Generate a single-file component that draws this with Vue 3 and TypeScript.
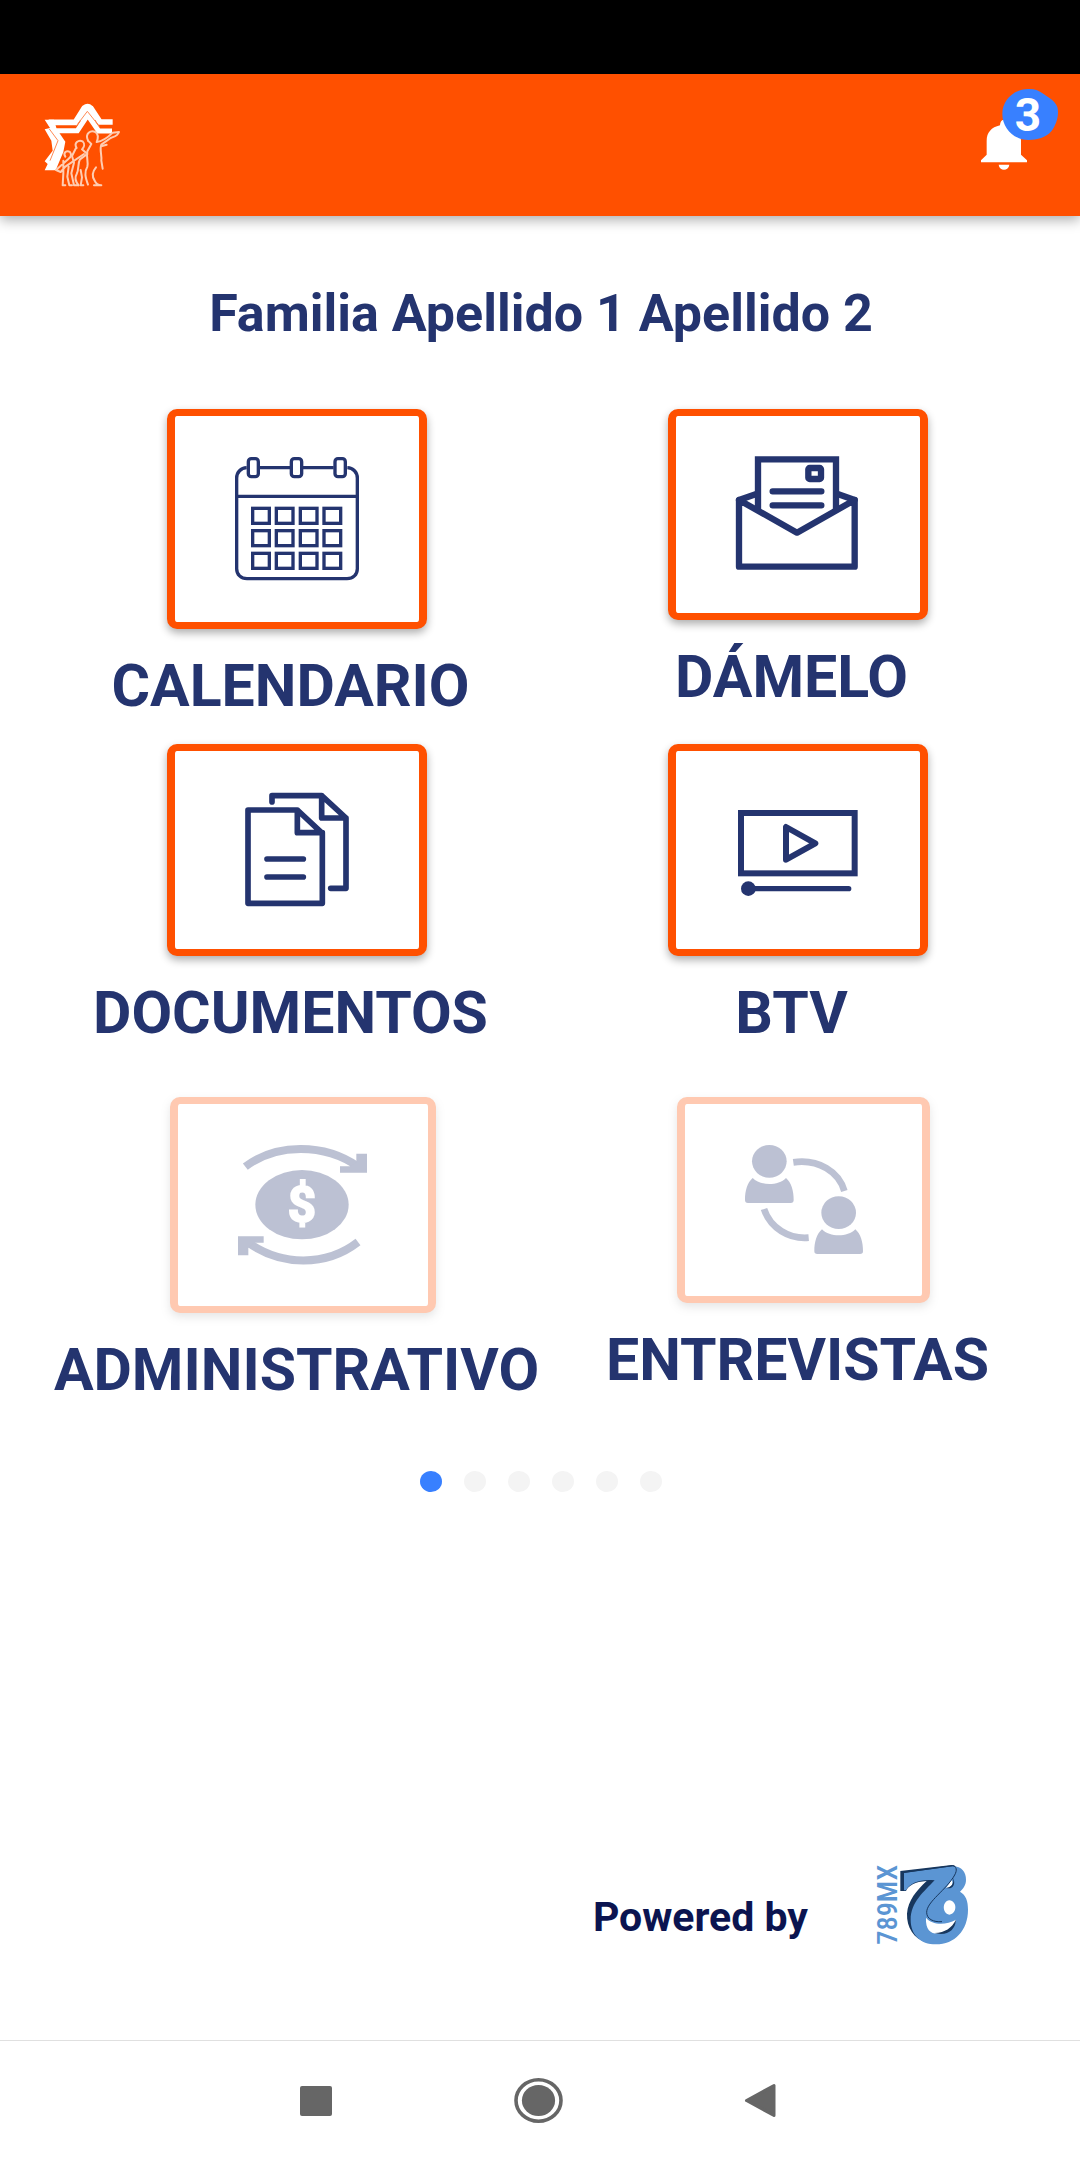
<script setup lang="ts">
import { ref } from 'vue'

type IconName = 'calendar' | 'mail' | 'documents' | 'video' | 'money' | 'people'

interface Tile {
  id: string
  label: string
  icon: IconName
  viewBox: string
  width: number
  height: number
  disabled?: boolean
}

const rows: Tile[][] = [
  [
    { id: 'calendario', label: 'CALENDARIO', icon: 'calendar', viewBox: '438 201 372 372', width: 124, height: 124 },
    { id: 'damelo', label: 'DÁMELO', icon: 'mail', viewBox: '405 201 372 345', width: 124, height: 115 },
  ],
  [
    { id: 'documentos', label: 'DOCUMENTOS', icon: 'documents', viewBox: '468 186 372 348', width: 124, height: 116 },
    { id: 'btv', label: 'BTV', icon: 'video', viewBox: '405 186 372 348', width: 124, height: 116 },
  ],
  [
    { id: 'administrativo', label: 'ADMINISTRATIVO', icon: 'money', viewBox: '597 195 390 360', width: 130, height: 120, disabled: true },
    { id: 'entrevistas', label: 'ENTREVISTAS', icon: 'people', viewBox: '462 195 351 330', width: 117, height: 110, disabled: true },
  ],
]

const dayColumns = [491, 562, 634, 705]
const dayRows = [355, 422, 490]
const slides = 6
const current = ref(0)
</script>

<template>
  <div class="page">
    <div class="status-bar"></div>
    <header class="app-bar">
      <svg class="brand" viewBox="132 130 228 249" aria-label="Logo">
        <g fill="none" stroke="#fff" stroke-linejoin="miter">
          <path d="M338 184H300L272 142Q263 134 253 142L226 185H146" stroke-width="17" />
          <path d="M336 211H296L263 163L232 210H158" stroke-width="15" />
          <path d="M240 178L262 146L286 178" stroke-width="16" />
        </g>
        <path fill="#fff" d="M134 177H162L170 205L196 243L190 274L167 329H134L143 310L134 302L158 270L154 240L134 206L150 202Z" />
        <g fill="none" stroke="#ff8a55" stroke-width="3">
          <path d="M148 205L174 240L150 300M228 197L262 152L298 197" />
        </g>
        <g fill="none" stroke="#ffcdb2" stroke-width="6" stroke-linecap="round" stroke-linejoin="round">
          <path d="M264 240C254 218 272 208 286 214C298 222 294 234 290 244C310 242 326 228 338 216L357 214C352 228 340 228 332 232L304 252C298 266 306 282 304 300L308 324" />
          <path d="M264 240L274 250L262 272C258 290 266 306 262 318C252 334 256 350 264 372M320 252L306 256" />
          <path d="M288 320C276 334 276 348 284 360C288 370 294 374 304 374H282" />
          <path d="M230 262C220 246 236 236 248 242C256 250 252 260 246 266L262 280L240 296C232 310 238 324 230 340C224 350 226 362 236 374M228 262L216 286L222 306L214 338L222 374H232" />
          <path d="M196 288C188 276 200 268 210 274C216 282 212 290 206 294L168 328L182 334L196 318L252 280M190 300V338L188 374H196M206 318L202 348L208 374H216M242 328L246 350L242 374H250" />
        </g>
      </svg>
      <button class="bell" type="button" aria-label="Notificaciones">
        <svg class="bell-icon" viewBox="243 88 231 243" aria-hidden="true">
          <path fill="#fff" d="M300 197C301 185 306 180 312 180C320 180 324 185 325 197C350 203 363 219 363 243V285L381 302V308H243V302L260 285V243C260 219 274 203 300 197ZM296 315H328C326 335 298 335 296 315Z" />
          <path fill="#3880ff" d="M384 88C404 87 416 92 432 104C446 114 463 122 472 142C478 164 470 194 454 215C438 234 411 241 386 241C345 241 307 209 307 162C307 120 344 88 384 88Z" />
        </svg>
        <span class="badge">3</span>
      </button>
    </header>

    <main>
      <h1>Familia Apellido 1 Apellido 2</h1>
      <div class="rows">
        <div v-for="(row, r) in rows" :key="r" class="row">
          <div v-for="tile in row" :key="tile.id" class="tile">
            <button class="card" type="button" :disabled="tile.disabled" :aria-labelledby="tile.id">
              <svg :viewBox="tile.viewBox" :width="tile.width" :height="tile.height" aria-hidden="true">
                <g v-if="tile.icon === 'calendar'" fill="none" stroke="#24346f" stroke-width="10">
                  <path d="M473 233C456 234 443 246 443 264V536C443 554 456 566 474 566H774C792 566 805 554 805 536V264C805 246 792 234 775 233M512 233H603M642 233H734M443 319H805" />
                  <rect x="478" y="206" width="30" height="54" rx="9" />
                  <rect x="607" y="206" width="31" height="54" rx="9" />
                  <rect x="738" y="206" width="31" height="54" rx="9" />
                  <template v-for="y in dayRows" :key="y">
                    <rect v-for="x in dayColumns" :key="x" :x="x" :y="y" width="50" height="45" />
                  </template>
                </g>
                <g v-else-if="tile.icon === 'mail'" fill="none" stroke="#24346f" stroke-width="19" stroke-linecap="round" stroke-linejoin="round">
                  <path d="M414 330V530H761V330L588 428Z" />
                  <path d="M414 330L466 312M761 330L710 312" />
                  <path d="M471 358V208H705V358" stroke-linecap="butt" stroke-linejoin="miter" />
                  <path d="M515 304H661M515 346H661" />
                  <rect x="622" y="234" width="38" height="33" rx="4" />
                </g>
                <g v-else-if="tile.icon === 'documents'" fill="none" stroke="#24346f" stroke-width="17" stroke-linecap="round" stroke-linejoin="round">
                  <path d="M507 240H655L730 310V520H507ZM655 240V308H730" />
                  <path d="M579 216V197H728L801 264V475H755M728 197V264H801" />
                  <path d="M564 387H673M564 441H673" />
                </g>
                <g v-else-if="tile.icon === 'video'" fill="none" stroke="#24346f" stroke-width="18">
                  <rect x="420" y="249" width="341" height="181" />
                  <path d="M555 291V389L643 340Z" stroke-linejoin="round" />
                  <path d="M444 476H743" stroke-linecap="round" stroke-width="16" />
                  <circle cx="442" cy="476" r="22" fill="#24346f" stroke="none" />
                </g>
                <g v-else-if="tile.icon === 'money'" fill="#24346f">
                  <path d="M619 260C710 190 855 188 958 260" fill="none" stroke="#24346f" stroke-width="24" />
                  <path d="M952 221H984V278H903V259H932L952 248Z" />
                  <path d="M957 486C862 560 725 560 622 484" fill="none" stroke="#24346f" stroke-width="24" />
                  <path d="M597 469H674V488H646L628 504V526H597Z" />
                  <ellipse cx="789" cy="374" rx="140" ry="104" />
                  <text x="789" y="427" text-anchor="middle" class="dollar">$</text>
                </g>
                <g v-else fill="#24346f">
                  <g>
                    <ellipse cx="535" cy="244" rx="52" ry="49" />
                    <path d="M485 294C508 318 562 318 585 294C601 308 608 332 608 360Q608 369 599 369H471Q462 369 462 360C462 332 469 308 485 294Z" />
                  </g>
                  <g transform="translate(208 154)">
                    <ellipse cx="535" cy="244" rx="52" ry="49" />
                    <path d="M485 294C508 318 562 318 585 294C601 308 608 332 608 360Q608 368 599 368H471Q462 368 462 360C462 332 469 308 485 294Z" />
                  </g>
                  <path d="M607 247C683 236 744 276 760 333" fill="none" stroke="#24346f" stroke-width="20" />
                  <path d="M519 387C538 444 594 478 653 473" fill="none" stroke="#24346f" stroke-width="20" />
                </g>
              </svg>
            </button>
            <p :id="tile.id" class="label">{{ tile.label }}</p>
          </div>
        </div>
      </div>
      <div class="dots">
        <button
          v-for="n in slides"
          :key="n"
          type="button"
          class="dot"
          :class="{ active: current === n - 1 }"
          :aria-label="`Página ${n}`"
          @click="current = n - 1"
        ></button>
      </div>
    </main>

    <footer class="powered">
      <span>Powered by</span>
      <svg class="powered-logo" viewBox="900 104 294 240" aria-label="789MX">
        <text class="mx" transform="translate(980 343) rotate(-90)">789MX</text>
        <path fill="#17375e" d="M991 122L1145 104Q1160 104 1160 118L1110 180C1070 220 1040 270 1072 336C1030 326 1010 290 1011 250C1014 210 1040 180 1070 152C1035 154 1015 166 1008 182H991Z" />
        <path fill="#5b95d3" fill-rule="evenodd" d="M1002 128L1148 108C1176 108 1188 126 1188 148C1188 164 1180 174 1170 184C1188 194 1194 212 1194 238C1194 300 1154 342 1098 342C1050 342 1022 312 1022 268C1022 216 1062 184 1094 150C1052 146 1022 156 1008 180H1002ZM1138 210C1116 212 1116 250 1138 253C1162 250 1162 212 1138 210ZM1068 262C1066 300 1084 312 1108 310C1136 308 1154 292 1158 268C1126 286 1086 284 1068 262ZM1128 173L1145 149C1152 162 1142 174 1128 173Z" />
        <path fill="none" stroke="#17375e" stroke-width="3" d="M1002 126L1148 106C1160 108 1162 120 1154 134C1130 178 1070 214 1070 246C1070 266 1090 276 1116 274" />
        <path fill="#17375e" d="M1094 308C1126 306 1144 294 1158 268C1156 300 1130 318 1094 308ZM1128 173C1150 178 1158 160 1149 142C1153 158 1146 170 1128 173Z" />
      </svg>
    </footer>

    <nav class="system-nav">
      <button type="button" aria-label="Recientes">
        <svg width="32" height="30" viewBox="0 0 32 30"><rect width="32" height="30" rx="2" fill="#666" /></svg>
      </button>
      <button type="button" aria-label="Inicio">
        <svg width="49" height="45" viewBox="0 0 49 45">
          <ellipse cx="24.5" cy="22.5" rx="22.5" ry="20.7" fill="none" stroke="#666" stroke-width="3.6" />
          <ellipse cx="24.5" cy="22.5" rx="16.6" ry="15.4" fill="#666" />
        </svg>
      </button>
      <button type="button" aria-label="Atrás">
        <svg width="31" height="33" viewBox="0 0 31 33"><path d="M29 1.5V31.5L1.5 16.5Z" fill="#666" stroke="#666" stroke-width="3" stroke-linejoin="round" /></svg>
      </button>
    </nav>
  </div>
</template>

<style>
body {
  margin: 0;
  background: #fff;
}
</style>

<style scoped>
.page {
  display: flex;
  flex-direction: column;
  min-height: 100vh;
  background: #fff;
  color: #24346f;
  font-family: Roboto, "Liberation Sans", sans-serif;
  font-weight: 700;
}
button {
  margin: 0;
  padding: 0;
  border: 0;
  background: none;
  font: inherit;
}
svg {
  display: block;
  overflow: visible;
}
.status-bar {
  height: 74px;
  background: #000;
}
.app-bar {
  display: flex;
  align-items: center;
  justify-content: space-between;
  height: 142px;
  padding: 0 22px 0 44px;
  background: #ff5000;
  box-shadow: 0 4px 12px rgba(0, 0, 0, 0.32);
}
.brand {
  width: 76px;
  height: 83px;
}
.bell {
  position: relative;
  align-self: flex-start;
  margin-top: 15px;
}
.bell-icon {
  width: 77px;
  height: 81px;
}
.badge {
  position: absolute;
  top: 0;
  right: 2px;
  width: 56px;
  color: #fff;
  font-size: 46px;
  line-height: 52px;
  text-align: center;
}
main {
  padding: 68px 38px 0 40px;
}
h1 {
  margin: 0;
  font-size: 52px;
  line-height: 60px;
  text-align: center;
}
.rows {
  display: flex;
  flex-direction: column;
  gap: 28px;
  margin-top: 65px;
}
.row {
  display: grid;
  grid-template-columns: 1fr 1fr;
}
.row:last-child {
  margin-right: -6px;
  padding: 26px 0 0 6px;
}
.tile {
  display: flex;
  flex-direction: column;
  align-items: center;
}
.card {
  margin-left: 12px;
  padding: 41px 60px;
  border: solid #ff5000;
  border-width: 7px 8px;
  border-radius: 10px;
  background: #fff;
  box-shadow: 0 4px 8px rgba(0, 0, 0, 0.32);
}
.card:disabled {
  opacity: 0.3;
}
.label {
  margin: 27px 0 0;
  font-size: 59px;
  line-height: 60px;
  white-space: nowrap;
}
.dollar {
  fill: #fff;
  stroke: #fff;
  stroke-width: 6px;
  font-size: 148px;
}
.dots {
  display: flex;
  justify-content: center;
  gap: 22px;
  margin-top: 71px;
}
.dot {
  width: 22px;
  height: 21px;
  border-radius: 50%;
  background: #f4f4f4;
}
.dot.active {
  background: #3880ff;
}
.powered {
  display: flex;
  align-items: center;
  justify-content: flex-end;
  gap: 62px;
  margin-top: auto;
  padding: 0 112px 95px 0;
  color: #0b1450;
  font-size: 41px;
  line-height: 48px;
}
.powered span {
  padding-top: 24px;
}
.powered-logo {
  width: 98px;
  height: 80px;
}
.mx {
  fill: #5b95d3;
  font-family: "Roboto Condensed", "Liberation Sans Narrow", Roboto, sans-serif;
  font-size: 85px;
  font-weight: 500;
}
.system-nav {
  display: flex;
  justify-content: center;
  height: 119px;
  padding-right: 4px;
  border-top: 1px solid #e0e0e0;
}
.system-nav button {
  display: flex;
  align-items: center;
  justify-content: center;
  width: 222px;
}
</style>
